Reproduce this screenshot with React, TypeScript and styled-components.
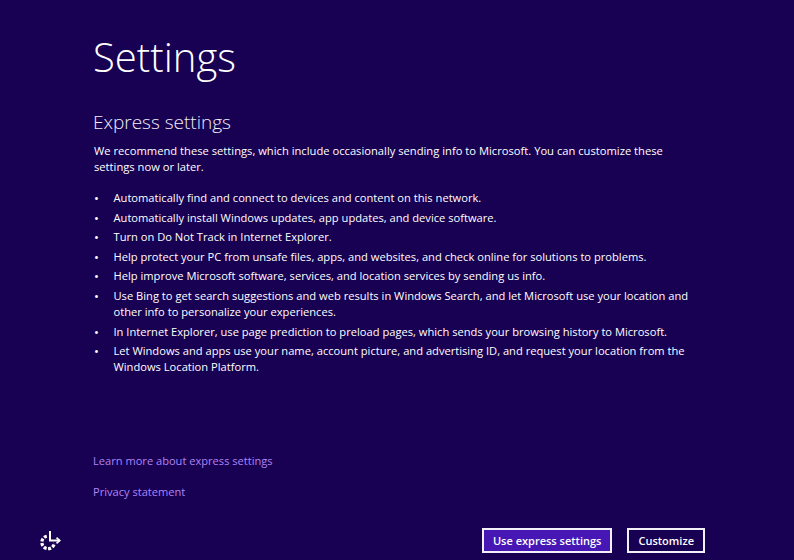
import * as React from 'react';
import styled, { createGlobalStyle } from 'styled-components';

const bullets = [
  ['Automatically find and connect to devices and content on this network.'],
  ['Automatically install Windows updates, app updates, and device software.'],
  ['Turn on Do Not Track in Internet Explorer.'],
  ['Help protect your PC from unsafe files, apps, and websites, and check online for solutions to problems.'],
  ['Help improve Microsoft software, services, and location services by sending us info.'],
  [
    'Use Bing to get search suggestions and web results in Windows Search, and let Microsoft use your location and',
    'other info to personalize your experiences.',
  ],
  ['In Internet Explorer, use page prediction to preload pages, which sends your browsing history to Microsoft.'],
  [
    'Let Windows and apps use your name, account picture, and advertising ID, and request your location from the',
    'Windows Location Platform.',
  ],
];

const GlobalStyle = createGlobalStyle`
  html, body {
    margin: 0;
    background: #180052;
  }
`;

export default function App() {
  return (
    <Page>
      <GlobalStyle />
      <Title>Settings</Title>
      <Subtitle>Express settings</Subtitle>
      <Intro>
        We recommend these settings, which include occasionally sending info to Microsoft. You can customize these
        <br />
        settings now or later.
      </Intro>
      <List>
        {bullets.map(lines => (
          <Item key={lines[0]}>
            <Dot>•</Dot>
            <span>
              {lines.map((line, i) => (
                <React.Fragment key={line}>
                  {i > 0 && <br />}
                  {line}
                </React.Fragment>
              ))}
            </span>
          </Item>
        ))}
      </List>
      <Links>
        <TextLink>Learn more about express settings</TextLink>
        <TextLink>Privacy statement</TextLink>
      </Links>
      <Footer>
        <Ease width="22" height="22" viewBox="0 0 22 22" fill="none" stroke="#fff">
          <path d="M7.8 6.2A6.3 6.3 0 1 0 15.4 13" strokeWidth="3.2" strokeDasharray="3 1.5" />
          <path d="M11 1V10.5H20.5" strokeWidth="2" />
          <path d="M17.5 7.6L20.8 10.5L17.5 13.4" strokeWidth="1.7" />
        </Ease>
        <Buttons>
          <Button $primary>Use express settings</Button>
          <Button>Customize</Button>
        </Buttons>
      </Footer>
    </Page>
  );
}

const Page = styled.div`
  box-sizing: border-box;
  width: 794px;
  height: 560px;
  overflow: hidden;
  display: flex;
  flex-direction: column;
  padding: 29px 89px 0 93px;
  background: #180052;
  color: #fff;
  font-family: 'Open Sans', 'Noto Sans', sans-serif;
`;

const Title = styled.h1`
  margin: 0;
  font-size: 40.1px;
  line-height: 56px;
  font-weight: 300;
`;

const Subtitle = styled.h2`
  margin: 22px 0 0;
  font-size: 19px;
  line-height: 30px;
  font-weight: 300;
  color: #f0eef6;
`;

const Intro = styled.p`
  margin: 6px 0 0 1px;
  font-size: 11.2px;
  line-height: 16px;
  white-space: nowrap;
`;

const List = styled.ul`
  margin: 15px 0 0;
  padding: 0 0 0 1px;
  list-style: none;
  display: flex;
  flex-direction: column;
  gap: 3.6px;
  font-size: 11.15px;
  line-height: 16px;
`;

const Item = styled.li`
  display: flex;
  white-space: nowrap;
`;

const Dot = styled.span`
  width: 19.5px;
  flex: none;
  font-size: 13px;
`;

const Links = styled.div`
  margin-top: auto;
  display: flex;
  flex-direction: column;
  gap: 12px;
`;

const TextLink = styled.a`
  font-size: 11.1px;
  line-height: 19px;
  color: #ad85f5;
`;

const Footer = styled.div`
  display: flex;
  align-items: center;
  justify-content: space-between;
  margin: 27px 0 7px -54px;
`;

const Ease = styled.svg`
  display: block;
`;

const Buttons = styled.div`
  display: flex;
  gap: 15px;
`;

const Button = styled.button<{ $primary?: boolean }>`
  box-sizing: border-box;
  height: 25px;
  padding: 0 9px;
  border: 2px solid #f2f0f8;
  border-radius: 0;
  background: ${p => (p.$primary ? '#4617b4' : '#180052')};
  color: #fff;
  font-family: inherit;
  font-size: 11px;
  font-weight: 600;
`;
